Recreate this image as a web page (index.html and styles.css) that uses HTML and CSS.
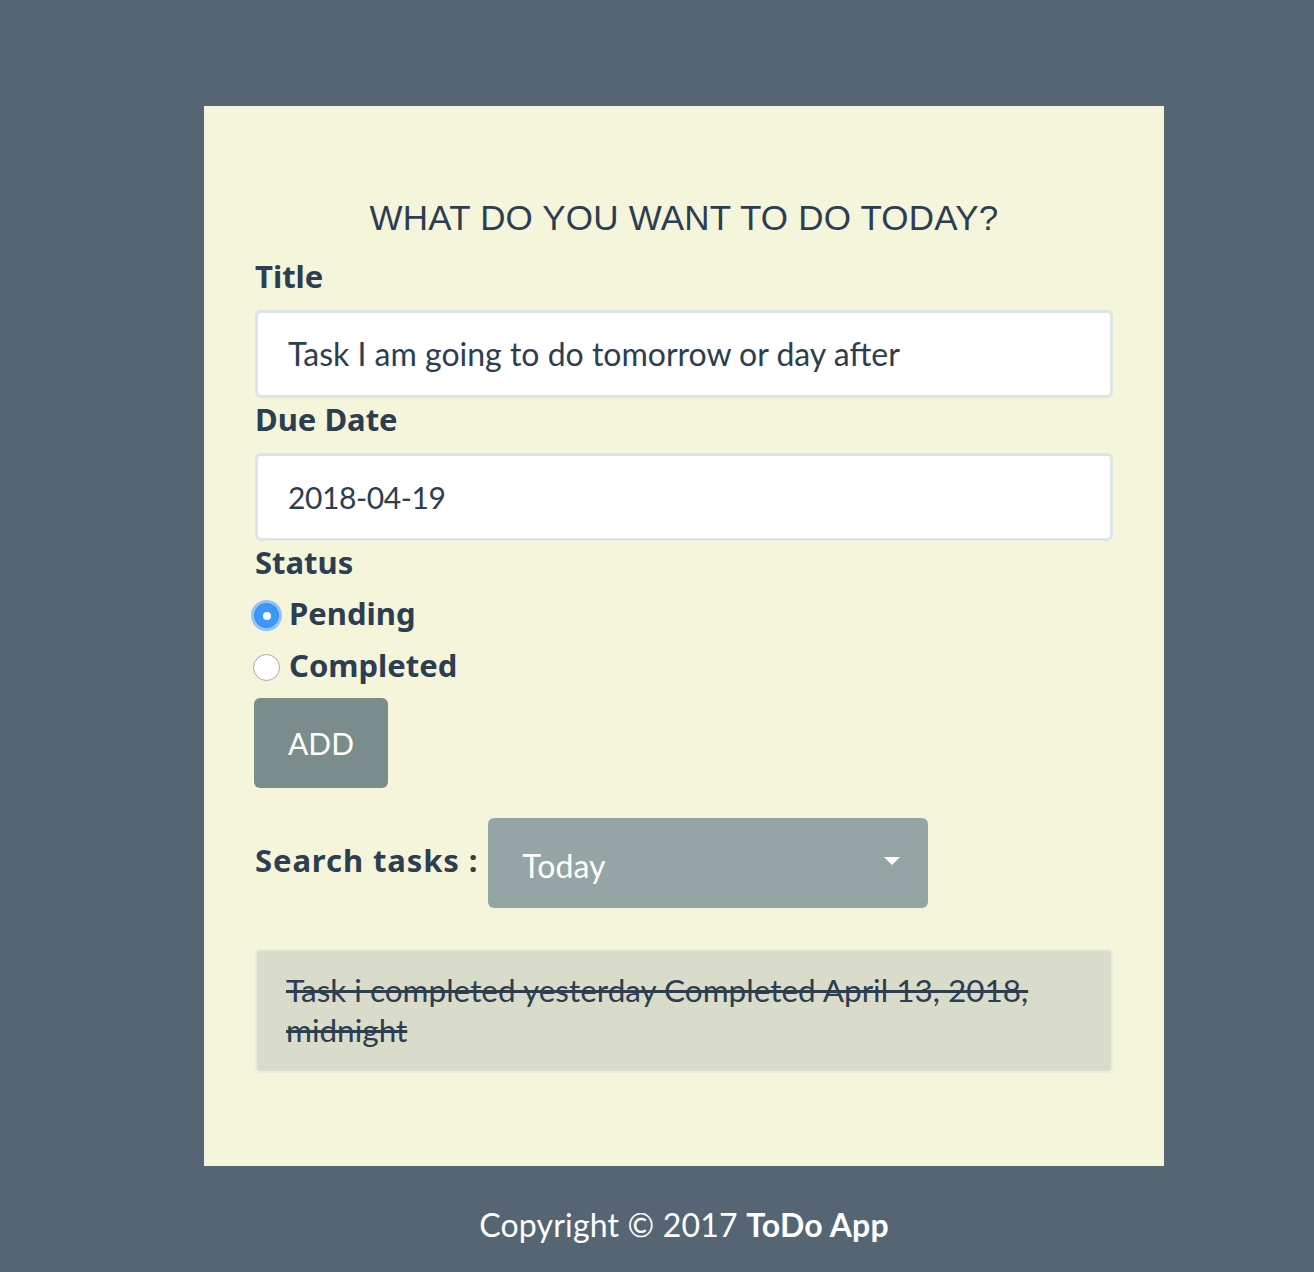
FILE: index.html
```html
<!DOCTYPE html>
<html>
<head>
<meta charset="utf-8">
<link rel="stylesheet" href="styles.css">
</head>
<body>
<div class="page">
  <div class="card">
    <h1 class="heading">WHAT DO YOU WANT TO DO TODAY?</h1>
    <form class="form">
      <label class="label">Title</label>
      <div class="input">Task I am going to do tomorrow or day after</div>
      <label class="label">Due Date</label>
      <div class="input date">2018-04-19</div>
      <label class="label">Status</label>
      <div class="radio-row first">
        <span class="radio checked"><span class="dot"></span></span>
        <span class="radio-text">Pending</span>
      </div>
      <div class="radio-row">
        <span class="radio"></span>
        <span class="radio-text">Completed</span>
      </div>
      <div class="btn">ADD</div>
    </form>
    <div class="search">
      <span class="search-label">Search tasks :</span>
      <div class="select">
        <span class="select-text">Today</span>
        <svg class="caret" width="16" height="8" viewBox="0 0 16 8"><path d="M0 0 L16 0 L8 8 Z" fill="#fff"/></svg>
      </div>
    </div>
    <div class="task">
      <span class="done">Task i completed yesterday Completed April 13, 2018, midnight</span>
    </div>
  </div>
  <footer class="footer">Copyright © 2017 <b>ToDo App</b></footer>
</div>
</body>
</html>
```

FILE: styles.css
```css
html, body {
  margin: 0;
  padding: 0;
  background: #566573;
}
body {
  font-family: Lato, "Open Sans", sans-serif;
  color: #2c3e50;
}
.page {
  width: 960px;
  margin-left: 204px;
}
.card {
  background: #f5f5dc;
  margin-top: 106px;
  padding: 90px 51px 0 51px;
  height: 1060px;
  box-sizing: border-box;
}
.heading {
  margin: 0;
  font-family: "Liberation Sans", Arial, sans-serif;
  font-weight: normal;
  font-size: 35px;
  line-height: 44px;
  text-align: center;
  letter-spacing: 0.2px;
}
.form {
  display: flex;
  flex-direction: column;
  align-items: flex-start;
  margin-top: 18px;
}
.label {
  font-family: "Noto Sans", Lato, sans-serif;
  font-weight: 700;
  font-size: 31px;
  line-height: 36px;
  display: block;
}
.input {
  align-self: stretch;
  box-sizing: border-box;
  height: 88px;
  margin: 16px 0 3px;
  background: #fff;
  border: 3px solid #dde4ea;
  border-radius: 6px;
  padding: 0 30px;
  font-size: 32px;
  line-height: 82px;
}
.input.date {
  font-size: 30px;
  letter-spacing: -0.4px;
}
.radio-row {
  display: flex;
  align-items: center;
  height: 52px;
}
.radio-row.first {
  margin-top: 7px;
}
.radio {
  width: 27px;
  height: 27px;
  margin: 5px 9px 0 -2px;
  border-radius: 50%;
  border: 1px solid #a8a8a8;
  background: #fff;
  display: flex;
  align-items: center;
  justify-content: center;
  box-sizing: border-box;
}
.radio.checked {
  width: 25px;
  height: 25px;
  margin: 5px 10px 0 -1px;
  background: #3d97fb;
  border: 1px solid #3689e6;
  box-shadow: 0 0 0 3px #92c3f8;
}
.dot {
  width: 8px;
  height: 8px;
  border-radius: 50%;
  background: #fff;
}
.radio-text {
  font-family: "Noto Sans", Lato, sans-serif;
  font-weight: 700;
  font-size: 31px;
  line-height: 52px;
}
.btn {
  margin-top: 7px;
  margin-left: -1px;
  width: 134px;
  height: 90px;
  background: #7a8c8c;
  border-radius: 6px;
  color: #fff;
  font-size: 30px;
  display: flex;
  align-items: center;
  justify-content: center;
  box-sizing: border-box;
}
.search {
  display: flex;
  align-items: center;
  margin-top: 30px;
  gap: 10px;
}
.search-label {
  font-family: "Noto Sans", Lato, sans-serif;
  font-weight: 700;
  font-size: 31px;
  letter-spacing: 0.9px;
  margin-top: -7px;
}
.select {
  width: 440px;
  height: 90px;
  background: #95a5a6;
  border-radius: 6px;
  color: #fff;
  display: flex;
  align-items: center;
  justify-content: space-between;
  padding: 0 28px 0 34px;
  box-sizing: border-box;
}
.select-text {
  font-size: 32px;
  margin-top: 4px;
}
.caret {
  display: block;
  margin-top: -4px;
}
.task {
  margin-top: 41px;
  background: #d9dcca;
  border: 2px solid #e9ebdf;
  border-radius: 6px;
  padding: 19px 31px 21px 29px;
  font-size: 31.5px;
  line-height: 40px;
}
.done {
  text-decoration: line-through;
}
.footer {
  text-align: center;
  color: #fff;
  font-size: 32px;
  padding-top: 37px;
  line-height: 44px;
  letter-spacing: 0.2px;
}
.footer b {
  font-weight: 700;
}
```
